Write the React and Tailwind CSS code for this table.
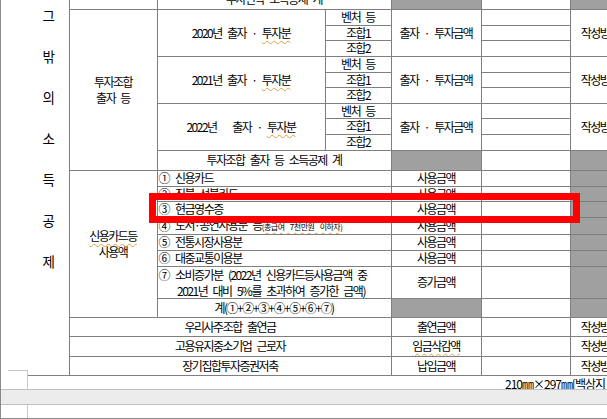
import React from "react";

// 한글 문서 화면 - 그 밖의 소득공제 표 일부
const wavy = "underline decoration-wavy decoration-[#e0a040] decoration-1 underline-offset-[2px]";

function Cell({ children, className = "", ...rest }) {
  return (
    <td
      className={`border border-[#7f7f7f] p-0 text-center align-middle whitespace-nowrap overflow-hidden ${className}`}
      {...rest}
    >
      {children}
    </td>
  );
}

const years = [
  { label: "2020년", sp: " ", h: ["h-[16px]", "h-[15px]", "h-[16px]"] },
  { label: "2021년", sp: " ", h: ["h-[16px]", "h-[15px]", "h-[16px]"] },
  { label: "2022년", sp: "\u00a0\u00a0\u00a0", h: ["h-[15px]", "h-[16px]", "h-[16px]"] },
];

const subs = ["벤처 등", "조합1", "조합2"];

const cardRows = [
  { n: "①", text: <span>신용카드</span>, h: "h-[16px]" },
  { n: "②", text: <span className={wavy}>직불·선불카드</span>, h: "h-[15px]" },
  { n: "③", text: <span>현금영수증</span>, h: "h-[16px]" },
  {
    n: "④",
    text: (
      <span>
        도서·공연사용분 등
        <span className={`text-[8px] tracking-[-0.5px] ${wavy}`}>(총급여 7천만원 이하자)</span>
      </span>
    ),
    h: "h-[15px]",
  },
  { n: "⑤", text: <span>전통시장사용분</span>, h: "h-[16px]" },
  { n: "⑥", text: <span className={wavy}>대중교통이용분</span>, h: "h-[16px]" },
];

const others = [
  { name: "우리사주조합 출연금", amt: "출연금액", h: "h-[19px]" },
  { name: "고용유지중소기업 근로자", amt: <span className={wavy}>임금삭감액</span>, h: "h-[20px]" },
  { name: "장기집합투자증권저축", amt: "납입금액", h: "h-[19px]" },
];

const sideChars = ["그", "밖", "의", "소", "득", "공", "제"];

function DocTable() {
  return (
    <table className="table-fixed border-collapse -mt-[10px] ml-[26px] w-[627px] text-[12px] leading-[14px] tracking-[-1.5px] [word-spacing:4px]">
      <colgroup>
        <col className="w-[42px]" />
        <col className="w-[88px]" />
        <col className="w-[168px]" />
        <col className="w-[66px]" />
        <col className="w-[90px]" />
        <col className="w-[89px]" />
        <col className="w-[84px]" />
      </colgroup>
      <tbody>
        <tr className="h-[19px]">
          <td rowSpan={22} className="p-0 align-top border-r border-b border-[#7f7f7f]">
            <div className="flex flex-col items-center gap-[25px] pt-[17px] pl-[2px] text-[13.5px] tracking-normal">
              {sideChars.map((c) => (
                <span key={c} className="leading-[16px]">{c}</span>
              ))}
            </div>
          </td>
          <Cell className="border-t-0" />
          <Cell colSpan={2} className="border-t-0">투자신탁 소득공제 계</Cell>
          <Cell className="border-t-0 bg-[#a0a0a0]" />
          <Cell className="border-t-0" />
          <Cell className="border-t-0 bg-[#a0a0a0]" />
        </tr>

        {years.map((y, yi) =>
          subs.map((s, si) => (
            <tr key={`${yi}-${si}`} className={y.h[si]}>
              {yi === 0 && si === 0 && (
                <Cell rowSpan={10} className="leading-[16px]">
                  <div>투자조합</div>
                  <div>출자 등</div>
                </Cell>
              )}
              {si === 0 && (
                <Cell rowSpan={3}>
                  {y.label}
                  {y.sp}출자 · <span className={wavy}>투자분</span>
                </Cell>
              )}
              <Cell>{s}</Cell>
              {si === 0 && <Cell rowSpan={3}>출자 · 투자금액</Cell>}
              <Cell />
              {si === 0 && <Cell rowSpan={3}>작성방법 참조</Cell>}
            </tr>
          ))
        )}

        <tr className="h-[20px]">
          <Cell colSpan={2}>투자조합 출자 등 소득공제 계</Cell>
          <Cell className="bg-[#a0a0a0]" />
          <Cell />
          <Cell className="bg-[#a0a0a0]" />
        </tr>

        {cardRows.map((r, i) => (
          <tr key={r.n} className={r.h}>
            {i === 0 && (
              <Cell rowSpan={8} className="leading-[16px]">
                <div>
                  <span className={wavy}>신용카드등</span>
                </div>
                <div>사용액</div>
              </Cell>
            )}
            <Cell colSpan={2} className="text-left">
              <div className="flex items-center gap-[6px] pl-[1px]">
                <span>{r.n}</span>
                {r.text}
              </div>
            </Cell>
            <Cell>사용금액</Cell>
            <Cell />
            <Cell className="bg-[#a0a0a0]" />
          </tr>
        ))}

        <tr className="h-[31px]">
          <Cell colSpan={2} className="text-left">
            <div className="flex items-center gap-[6px] pl-[1px] leading-[15px]">
              <span>⑦</span>
              <span>소비증가분 (2022년 신용카드등사용금액 중</span>
            </div>
            <div className="text-center pr-[6px] leading-[15px] pt-px">2021년 대비 5%를 초과하여 증가한 금액)</div>
          </Cell>
          <Cell>증가금액</Cell>
          <Cell />
          <Cell className="bg-[#a0a0a0]" />
        </tr>

        <tr className="h-[19px]">
          <Cell colSpan={2} className="[word-spacing:0px]">계(①+②+③+④+⑤+⑥+⑦)</Cell>
          <Cell className="bg-[#a0a0a0]" />
          <Cell />
          <Cell className="bg-[#a0a0a0]" />
        </tr>

        {others.map((o, i) => (
          <tr key={i} className={o.h}>
            <Cell colSpan={3}>{o.name}</Cell>
            <Cell>{o.amt}</Cell>
            <Cell />
            <Cell>작성방법 참조</Cell>
          </tr>
        ))}
      </tbody>
    </table>
  );
}

export default function App() {
  return (
    <div className="w-[607px] h-[419px] overflow-hidden bg-white border-l border-b border-[#8a8a8a] flex flex-col font-['Noto_Sans_CJK_KR',sans-serif] text-black">
      {/* page 1 */}
      <div className="relative h-[389px] shrink-0 overflow-hidden">
        <DocTable />
        <div className="pl-[504px] whitespace-nowrap text-[12px] leading-[16px] tracking-[-1px]">
          210㎜×297㎜[백상지 80g/㎡]
        </div>

        {/* corner marks */}
        <div className="absolute left-[7px] top-[370px] w-[20px] h-px bg-[#c8c8c8]" />
        <div className="absolute left-[26px] top-[370px] w-px h-[19px] bg-[#c8c8c8]" />

        {/* highlight box */}
        <div className="absolute left-[148px] top-[193px] w-[431px] h-[30px] border-[7px] border-[#ff0000]" />
      </div>

      {/* page gap */}
      <div className="h-[16px] shrink-0 bg-[#ececec] border-y border-[#c0c0c0]" />

      {/* page 2 */}
      <div className="relative flex-1">
        <div className="absolute left-[26px] top-0 w-px h-full bg-[#c8c8c8]" />
      </div>
    </div>
  );
}
